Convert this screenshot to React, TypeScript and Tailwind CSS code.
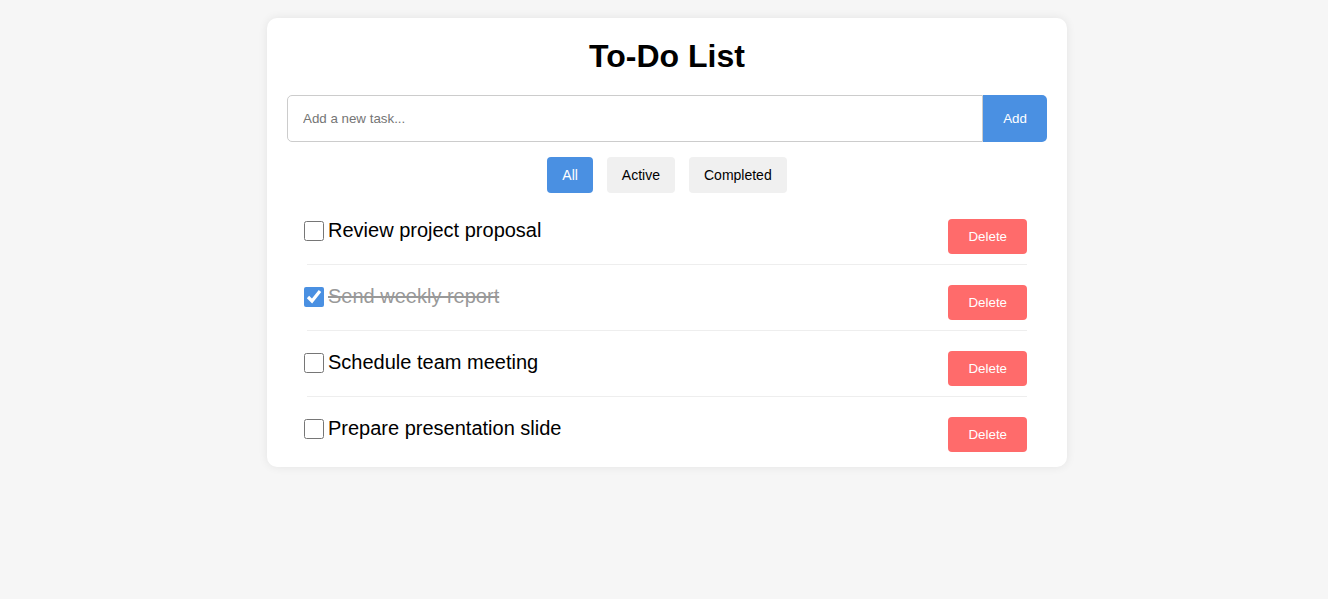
import { useState } from "react";

type Task = { id: number; text: string; done: boolean };

const App = () => {
  const [tasks, setTasks] = useState<Task[]>([
    { id: 1, text: "Review project proposal", done: false },
    { id: 2, text: "Send weekly report", done: true },
    { id: 3, text: "Schedule team meeting", done: false },
    { id: 4, text: "Prepare presentation slide", done: false },
  ]);
  const [filter, setFilter] = useState("All");
  const [input, setInput] = useState("");

  const filters = ["All", "Active", "Completed"];

  const shown = tasks.filter((t) =>
    filter === "All" ? true : filter === "Active" ? !t.done : t.done
  );

  const addTask = () => {
    if (!input.trim()) return;
    setTasks([...tasks, { id: Date.now(), text: input.trim(), done: false }]);
    setInput("");
  };

  return (
    <div className="min-h-screen bg-[#f6f6f6] pt-[18px] pl-[6px] font-['Liberation_Sans',Arial,sans-serif]">
      <div className="mx-auto w-[800px] rounded-[10px] bg-white px-[20px] pt-[20px] pb-[5px] shadow-[0_0_10px_rgba(0,0,0,0.08)]">
        <h1 className="mb-[20px] text-center text-[32px] font-bold leading-[37px] text-black">
          To-Do List
        </h1>

        <div className="mb-[15px] flex h-[47px]">
          <input
            value={input}
            onChange={(e) => setInput(e.target.value)}
            placeholder="Add a new task..."
            className="flex-1 rounded-l-[5px] border border-[#ccc] px-[15px] text-[13.333px] text-black outline-none placeholder:text-[#757575]"
          />
          <button
            onClick={addTask}
            className="w-[64px] rounded-r-[5px] bg-[#4a90e2] text-[13.333px] text-white"
          >
            Add
          </button>
        </div>

        <div className="mb-[16px] flex justify-center gap-[14px]">
          {filters.map((f) => (
            <button
              key={f}
              onClick={() => setFilter(f)}
              className={`h-[36px] rounded-[4px] px-[15px] text-[14px] ${
                filter === f
                  ? "bg-[#4a90e2] text-white"
                  : "bg-[#f0f0f0] text-black"
              }`}
            >
              {f}
            </button>
          ))}
        </div>

        <ul className="mx-[20px]">
          {shown.map((t) => (
            <li
              key={t.id}
              className="mb-[10px] flex justify-between border-b border-[#eee] py-[10px] last:mb-0 last:border-b-0"
            >
              <label className="flex items-start">
                <input
                  type="checkbox"
                  checked={t.done}
                  onChange={() =>
                    setTasks(
                      tasks.map((x) =>
                        x.id === t.id ? { ...x, done: !x.done } : x
                      )
                    )
                  }
                  className="-ml-[3px] mr-[4px] mt-[2px] h-[20px] w-[20px] accent-[#4a90e2]"
                />
                <span
                  className={`text-[20px] leading-[23px] ${
                    t.done ? "text-[#999] line-through" : "text-black"
                  }`}
                >
                  {t.text}
                </span>
              </label>
              <button
                onClick={() => setTasks(tasks.filter((x) => x.id !== t.id))}
                className="h-[35px] rounded-[4px] bg-[#ff6b6b] px-[20px] text-[13.333px] text-white"
              >
                Delete
              </button>
            </li>
          ))}
        </ul>
      </div>
    </div>
  );
};

export default App;
